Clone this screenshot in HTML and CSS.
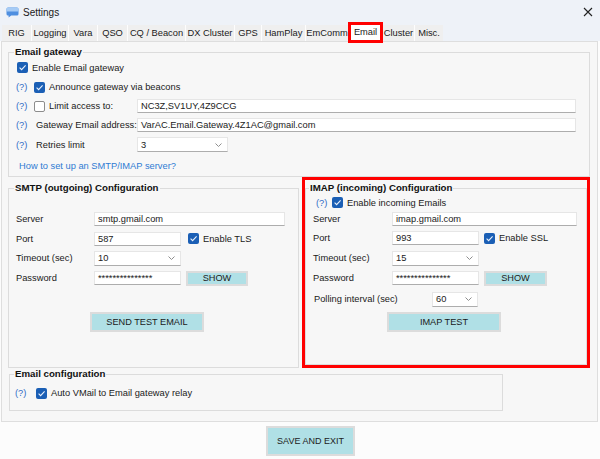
FILE: index.html
```html
<!DOCTYPE html>
<html>
<head>
<meta charset="utf-8">
<title>Settings</title>
<link rel="stylesheet" href="styles.css">
</head>
<body>
<div class="titlebar">
  <svg class="app-icon" viewBox="0 0 13 12"><path d="M2 1.5h9A1.5 1.5 0 0 1 12.5 3v5A1.5 1.5 0 0 1 11 9.5H5.2L2.6 11.5v-2H2A1.5 1.5 0 0 1 .5 8V3A1.5 1.5 0 0 1 2 1.5z" fill="#4f8fe0"/><path d="M2 1.5h9A1.5 1.5 0 0 1 12.5 3v2.6H.5V3A1.5 1.5 0 0 1 2 1.5z" fill="#a6cbf5"/></svg>
  <span class="title">Settings</span>
  <svg class="close" viewBox="0 0 10 10"><path d="M1 1L9 9M9 1L1 9" stroke="#222" stroke-width="1.1" fill="none"/></svg>
</div>
<div class="tabstrip">
  <div class="tabs">
    <div class="tab">RIG</div>
    <div class="tab">Logging</div>
    <div class="tab">Vara</div>
    <div class="tab">QSO</div>
    <div class="tab">CQ / Beacon</div>
    <div class="tab">DX Cluster</div>
    <div class="tab">GPS</div>
    <div class="tab">HamPlay</div>
    <div class="tab">EmComm</div>
    <div class="tab tab-active">Email</div>
    <div class="tab">Cluster</div>
    <div class="tab">Misc.</div>
  </div>
</div>
<div class="panel">
  <fieldset class="group gw">
    <legend>Email gateway</legend>
    <div class="gw-rows">
      <div class="row first">
        <span class="cb cb-on"><svg viewBox="0 0 11 11"><polyline points="2.6,5.6 4.6,7.6 8.6,3.4"/></svg></span>
        <span>Enable Email gateway</span>
      </div>
      <div class="row">
        <span class="help">(?)</span>
        <span class="cb cb-on"><svg viewBox="0 0 11 11"><polyline points="2.6,5.6 4.6,7.6 8.6,3.4"/></svg></span>
        <span>Announce gateway via beacons</span>
      </div>
      <div class="row">
        <span class="help">(?)</span>
        <div class="gw-lbl">
          <span class="cb cb-off"></span>
          <span>Limit access to:</span>
        </div>
        <div class="field w-gw">NC3Z,SV1UY,4Z9CCG</div>
      </div>
      <div class="row">
        <span class="help">(?)</span>
        <div class="gw-lbl"><span class="plain">Gateway Email address:</span></div>
        <div class="field w-gw">VarAC.Email.Gateway.4Z1AC@gmail.com</div>
      </div>
      <div class="row">
        <span class="help">(?)</span>
        <div class="gw-lbl"><span class="plain">Retries limit</span></div>
        <div class="field select w-ret"><span>3</span><svg viewBox="0 0 7 4"><polyline points="0.5,0.5 3.5,3.5 6.5,0.5"/></svg></div>
      </div>
      <div class="row link">How to set up an SMTP/IMAP server?</div>
    </div>
  </fieldset>

  <div class="cfg">
    <fieldset class="group smtp">
      <legend>SMTP (outgoing) Configuration</legend>
      <div class="smtp-body">
        <div class="srows">
          <div class="row">
            <span class="s-lbl">Server</span>
            <div class="field w-server">smtp.gmail.com</div>
          </div>
          <div class="row">
            <span class="s-lbl">Port</span>
            <div class="field w-87">587</div>
            <span class="cb cb-on cb-gap7"><svg viewBox="0 0 11 11"><polyline points="2.6,5.6 4.6,7.6 8.6,3.4"/></svg></span>
            <span>Enable TLS</span>
          </div>
          <div class="row">
            <span class="s-lbl">Timeout (sec)</span>
            <div class="field select w-87 h15"><span>10</span><svg viewBox="0 0 7 4"><polyline points="0.5,0.5 3.5,3.5 6.5,0.5"/></svg></div>
          </div>
          <div class="row">
            <span class="s-lbl">Password</span>
            <div class="field w-87 pwd">***************</div>
            <button class="btn show">SHOW</button>
          </div>
        </div>
        <div class="btn-row"><button class="btn test">SEND TEST EMAIL</button></div>
      </div>
    </fieldset>

    <div class="hl">
      <fieldset class="group imap">
        <legend>IMAP (incoming) Configuration</legend>
        <div class="imap-body">
          <div class="irows">
            <div class="row r-enable">
              <span class="help help-i">(?)</span>
              <span class="cb cb-on"><svg viewBox="0 0 11 11"><polyline points="2.6,5.6 4.6,7.6 8.6,3.4"/></svg></span>
              <span>Enable incoming Emails</span>
            </div>
            <div class="row">
              <span class="i-lbl">Server</span>
              <div class="field w-iserver">imap.gmail.com</div>
            </div>
            <div class="row">
              <span class="i-lbl">Port</span>
              <div class="field w-87">993</div>
              <span class="cb cb-on cb-gap5"><svg viewBox="0 0 11 11"><polyline points="2.6,5.6 4.6,7.6 8.6,3.4"/></svg></span>
              <span>Enable SSL</span>
            </div>
            <div class="row">
              <span class="i-lbl">Timeout (sec)</span>
              <div class="field select w-87 h15"><span>15</span><svg viewBox="0 0 7 4"><polyline points="0.5,0.5 3.5,3.5 6.5,0.5"/></svg></div>
            </div>
            <div class="row">
              <span class="i-lbl">Password</span>
              <div class="field w-87 pwd">***************</div>
              <button class="btn show show-i">SHOW</button>
            </div>
            <div class="row r-poll">
              <span class="p-lbl">Polling interval (sec)</span>
              <div class="field select w-poll h15"><span>60</span><svg viewBox="0 0 7 4"><polyline points="0.5,0.5 3.5,3.5 6.5,0.5"/></svg></div>
            </div>
          </div>
          <div class="btn-row btn-row-i"><button class="btn test">IMAP TEST</button></div>
        </div>
      </fieldset>
    </div>
  </div>

  <fieldset class="group ecfg">
    <legend>Email configuration</legend>
    <div class="row ecfg-row">
      <span class="help help-e">(?)</span>
      <span class="cb cb-on"><svg viewBox="0 0 11 11"><polyline points="2.6,5.6 4.6,7.6 8.6,3.4"/></svg></span>
      <span>Auto VMail to Email gateway relay</span>
    </div>
  </fieldset>
</div>
<div class="footer">
  <button class="btn save">SAVE AND EXIT</button>
</div>
</body>
</html>
```
FILE: styles.css
```css
* { box-sizing: border-box; }
html, body { margin: 0; padding: 0; }
body {
  width: 600px;
  height: 459px;
  overflow: hidden;
  background: #fcfcfc;
  font-family: "Liberation Sans", Arial, sans-serif;
  font-size: 9.3px;
  color: #1a1a1a;
}

/* title bar */
.titlebar {
  height: 24px;
  background: #eef2f8;
  display: flex;
  align-items: center;
  padding: 0 7px 0 6px;
}
.app-icon { display: block; width: 13px; height: 12px; margin-right: 4px; }
.title { flex: 1; font-size: 10px; color: #1a1a1a; }
.close { display: block; width: 10px; height: 10px; }

/* tabs */
.tabstrip {
  height: 17px;
  padding: 1px 0 0 2px;
  background: #eef2f8;
}
.tabs {
  display: grid;
  grid-template-columns: 29px 36px 28px 29px 57px 48px 26px 43px 42px 33px 31px 28px;
  column-gap: 1px;
  width: max-content;
  height: 16px;
  background: #fdfdfd;
}
.tab {
  background: #efefef;
  line-height: 16px;
  text-align: center;
  white-space: nowrap;
}
.tab-active {
  background: #fff;
  margin: -3px -1px -2px;
  border: 3px solid #ff0000;
  line-height: 15px;
  position: relative;
  z-index: 2;
}

/* panel */
.panel {
  margin-left: 1px;
  width: 597px;
  height: 381px;
  border: 1px solid #dedede;
  background: #f7f7f7;
  padding: 4px 0 0 6px;
}
.group {
  margin: 0;
  padding: 0;
  border: 1px solid #dcdcdc;
  min-width: 0;
}
.group legend {
  padding: 0 1px;
  margin-left: 5px;
  font-weight: bold;
  font-size: 9.7px;
  line-height: 12px;
  color: #111;
}
.row {
  display: flex;
  align-items: center;
  white-space: nowrap;
}
.help { color: #2d6bc5; flex: none; }
.cb {
  width: 11px;
  height: 11px;
  border-radius: 2px;
  flex: none;
  margin-right: 4px;
  display: flex;
}
.cb svg { width: 11px; height: 11px; }
.cb polyline { fill: none; stroke: #e9f1fc; stroke-width: 1.1; }
.cb-on { background: #1b5fb5; }
.cb-off { background: #fff; border: 1px solid #8c8c8c; }

.field {
  flex: none;
  background: #fff;
  border: 1px solid #e6e6e6;
  border-bottom-color: #adadad;
  height: 14px;
  padding-left: 3px;
  line-height: 12px;
  overflow: hidden;
}
.select {
  display: flex;
  align-items: center;
  justify-content: space-between;
  padding-right: 5px;
}
.select svg { width: 7px; height: 4px; display: block; }
.select polyline { fill: none; stroke: #8f8f8f; stroke-width: 1; }
.h15 { height: 15px; }

/* email gateway */
.gw { width: 582px; }
.gw-rows {
  display: grid;
  grid-template-rows: 19px 20px 18px 19px 21px 21px;
}
.gw .help { width: 25px; padding-left: 7px; }
.gw .first { padding-left: 8px; }
.gw-lbl { width: 103px; display: flex; align-items: center; flex: none; }
.gw-lbl .plain { padding-left: 2px; }
.w-gw { width: 439px; }
.w-ret { width: 91px; height: 15px; }
.link { padding-left: 10px; color: #2f7bd3; }

/* config row */
.cfg { display: flex; height: 191px; }
.smtp { margin-top: 5px; width: 291px; height: 186px; }
.hl {
  margin-left: 3px;
  width: 288px;
  height: 191px;
  border: 3px solid #ff0000;
  padding-top: 2px;
}
.imap { width: 100%; height: 183px; }
.imap legend { margin-left: 3px; }

.smtp-body { padding: 15px 0 0 7px; }
.srows { display: grid; grid-template-rows: 20px 19px 20px 20px; }
.s-lbl { width: 78px; flex: none; }
.w-server { width: 191px; }
.w-87 { width: 87px; }
.cb-gap7 { margin-left: 7px; }
.cb-gap5 { margin-left: 5px; }
.pwd { line-height: 13px; }

.btn {
  font-family: inherit;
  font-size: 9.2px;
  color: #1a1a1a;
  background: #b0e0e6;
  border: 2px solid #dcdcdc;
  padding: 0;
  margin: 0;
  display: flex;
  align-items: center;
  justify-content: center;
  flex: none;
}
.show { margin-left: 5px; width: 62px; height: 15px; }
.show-i { width: 63px; }
.btn-row { display: flex; margin-top: 24px; padding-left: 74px; }
.btn-row-i { margin-top: 3px; }
.test { width: 114px; height: 20px; }

.imap-body { padding-left: 7px; }
.irows { display: grid; grid-template-rows: 17px 16px 22px 18px 22px 20px; }
.r-enable { padding-left: 3px; }
.help-i { width: 16px; }
.i-lbl { width: 79px; flex: none; }
.w-iserver { width: 185px; }
.r-poll { padding-left: 1px; }
.p-lbl { width: 118px; flex: none; }
.w-poll { width: 46px; }

/* email configuration */
.ecfg { margin-left: 1px; width: 494px; height: 43px; }
.ecfg legend { margin-left: 4px; }
.ecfg-row { height: 26px; }
.help-e { width: 26px; padding-left: 5px; }

/* footer */
.footer { padding: 4px 0 0 266px; }
.save { width: 89px; height: 30px; font-size: 9px; color: #222; }
```
